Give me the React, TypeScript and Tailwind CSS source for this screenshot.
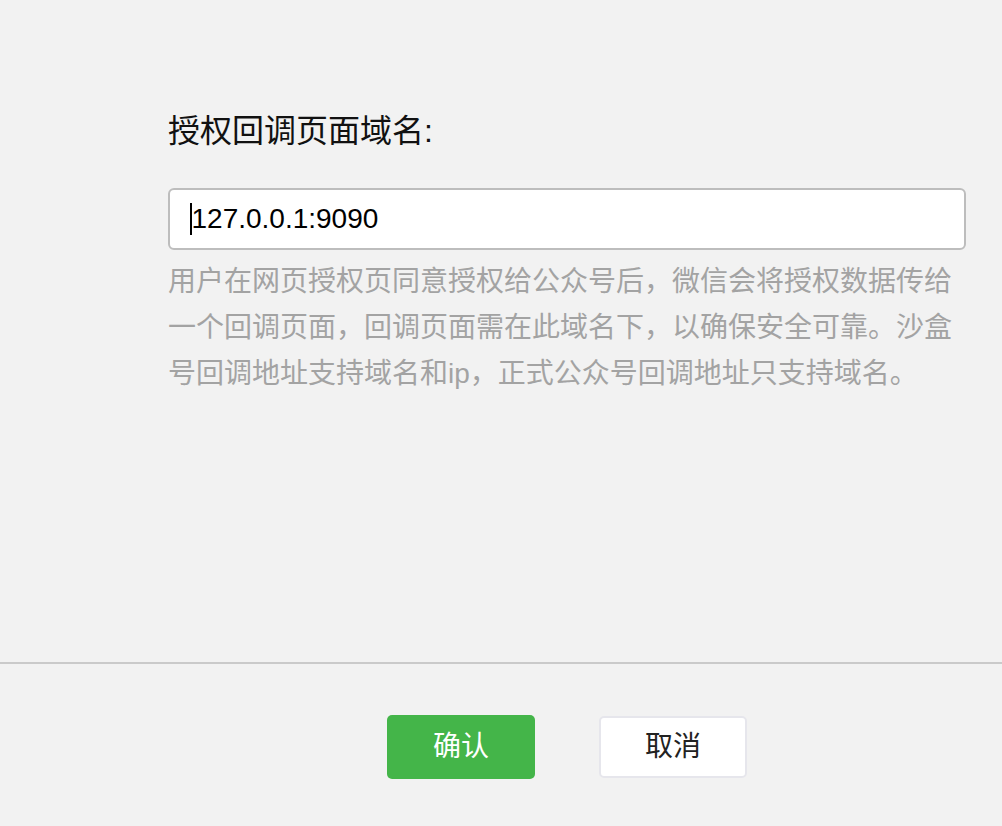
const FONT = "font-['Liberation_Sans','Noto_Sans_CJK_SC',sans-serif]";

const DomainDialog = () => {
  return (
    <div className={`flex h-[826px] w-full flex-col bg-[#f2f2f2] ${FONT}`}>
      <div className="h-[662px] pl-[168px] pt-[110px]">
        <div className="text-[32px] leading-[42px] text-[#111]">授权回调页面域名:</div>

        <div className="mt-[36px] flex h-[62px] w-[798px] items-center rounded-[6px] border-2 border-[#bdbdbd] bg-white pl-[20px]">
          <span className="h-[32px] w-[1.5px] bg-black"></span>
          <span className="text-[28px] leading-none text-black">127.0.0.1:9090</span>
        </div>

        <p className="mt-[9px] w-[798px] text-[28px] leading-[46px] text-[#a3a3a3]">
          用户在网页授权页同意授权给公众号后，微信会将授权数据传给一个回调页面，回调页面需在此域名下，以确保安全可靠。沙盒号回调地址支持域名和ip，正式公众号回调地址只支持域名。
        </p>
      </div>

      <div className="flex flex-1 gap-[64px] border-t-2 border-[#cacaca] pl-[387px] pt-[51px]">
        <button className="h-[64px] w-[148px] rounded-[5px] bg-[#44b549] text-[28px] text-white">
          确认
        </button>
        <button className="mt-px h-[62px] w-[148px] rounded-[5px] border-2 border-[#e6e6ec] bg-white text-[28px] text-[#222]">
          取消
        </button>
      </div>
    </div>
  );
};

export default function App() {
  return <DomainDialog />;
}
